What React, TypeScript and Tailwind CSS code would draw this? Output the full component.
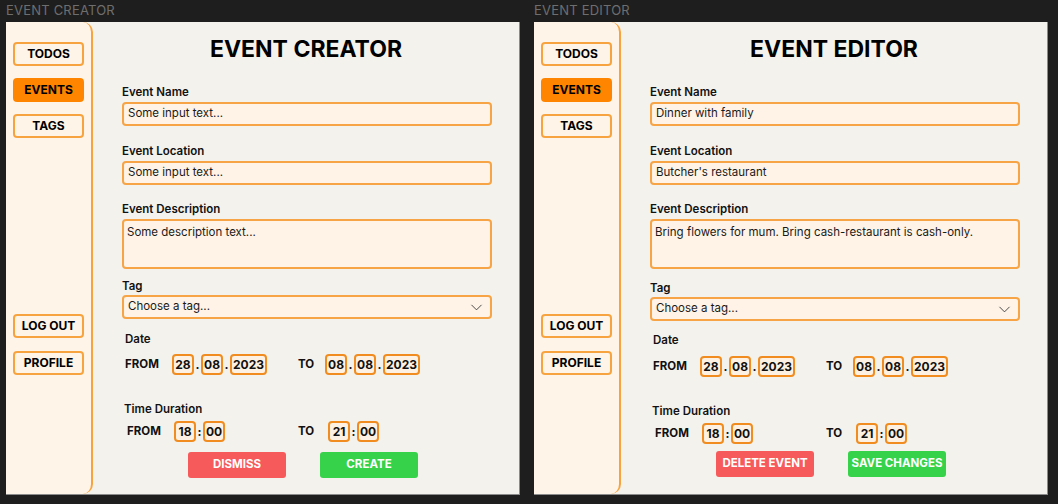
import { ChevronDown } from "lucide-react";

interface FormData {
  title: string;
  name: string;
  location: string;
  description: string;
  left: string;
  right: string;
  editor: boolean;
}

const forms: FormData[] = [
  {
    title: "EVENT CREATOR",
    name: "Some input text...",
    location: "Some input text...",
    description: "Some description text...",
    left: "DISMISS",
    right: "CREATE",
    editor: false,
  },
  {
    title: "EVENT EDITOR",
    name: "Dinner with family",
    location: "Butcher's restaurant",
    description: "Bring flowers for mum. Bring cash-restaurant is cash-only.",
    left: "DELETE EVENT",
    right: "SAVE CHANGES",
    editor: true,
  },
];

function NavButton({ label, active }: { label: string; active?: boolean }) {
  return (
    <div
      className={
        "w-[71px] h-[24px] rounded-[4px] border-2 flex items-center justify-center text-[12px] font-bold text-black " +
        (active ? "bg-[#ff8500] border-[#ff8500]" : "bg-[#fef4e8] border-[#f7a440]")
      }
    >
      {label}
    </div>
  );
}

function Box({ value, wide }: { value: string; wide?: boolean }) {
  return (
    <div
      className={
        "h-[21px] rounded-[4px] border-2 border-[#f08c20] bg-[#fdf1e3] flex items-center justify-center text-[12px] font-bold text-[#111] " +
        (wide ? "w-[37px]" : "w-[22px]")
      }
    >
      {value}
    </div>
  );
}

function Sep({ ch }: { ch: string }) {
  return <div className="w-[7px] text-center text-[12px] font-bold text-[#111]">{ch}</div>;
}

function Label({ text }: { text: string }) {
  return <div className="text-[11.5px] leading-[14px] font-semibold text-[#111]">{text}</div>;
}

function Field({ text }: { text: string }) {
  return (
    <div className="w-[370px] h-[24px] mt-[3px] rounded-[4px] border-2 border-[#f6a445] bg-[#fef3e6] flex items-center px-[4px] text-[11.5px] text-[#1a1a1a]">
      {text}
    </div>
  );
}

function Frame({ f }: { f: FormData }) {
  return (
    <div className="flex flex-col">
      <div className="h-[22px] flex items-center text-[13px] text-[#6e6e6e] tracking-[0.2px]">{f.title}</div>
      <div className="w-[514px] h-[473px] flex bg-[#f4f2ed] border-r border-b border-[#8b8b8b] overflow-hidden">
        <div className="w-[87px] shrink-0 bg-[#fef4e8] border-r-2 border-[#f7a440] rounded-r-[10px] flex flex-col items-center pt-[20px]">
          <div className="flex flex-col gap-[12px]">
            <NavButton label="TODOS" />
            <NavButton label="EVENTS" active />
            <NavButton label="TAGS" />
          </div>
          <div className="flex flex-col gap-[13px] mt-[176px]">
            <NavButton label="LOG OUT" />
            <NavButton label="PROFILE" />
          </div>
        </div>
        <div className="flex-1 flex flex-col pl-[29px]">
          <div className="pt-[13px] text-[23px] leading-[28px] font-bold text-black text-center pr-[29px]">
            {f.title}
          </div>
          <div className="mt-[22px]">
            <Label text="Event Name" />
            <Field text={f.name} />
          </div>
          <div className="mt-[18px]">
            <Label text="Event Location" />
            <Field text={f.location} />
          </div>
          <div className="mt-[17px]">
            <Label text="Event Description" />
            <div className="w-[370px] h-[50px] mt-[3px] rounded-[4px] border-2 border-[#f6a445] bg-[#fef3e6] px-[3px] pt-[4px] text-[11.5px] leading-[14px] text-[#1a1a1a]">
              {f.description}
            </div>
          </div>
          <div className={f.editor ? "mt-[12px]" : "mt-[10px]"}>
            <Label text="Tag" />
            <div className="w-[370px] h-[24px] mt-[2px] rounded-[4px] border-2 border-[#f6a445] bg-[#fef3e6] flex items-center justify-between pl-[4px] pr-[4px] text-[11.5px] text-[#1a1a1a]">
              <span>Choose a tag...</span>
              <ChevronDown size={19} strokeWidth={1.1} className="text-[#333]" />
            </div>
          </div>
          <div className={"pl-[3px] " + (f.editor ? "mt-[12px]" : "mt-[13px]")}>
            <Label text="Date" />
          </div>
          <div
            className={
              "flex items-center pl-[3px] text-[11.5px] font-bold text-[#111] " +
              (f.editor ? "mt-[9px]" : "mt-[8px]")
            }
          >
            <div className="w-[173px] flex items-center">
              <div className="w-[47px]">FROM</div>
              <Box value="28" />
              <Sep ch="." />
              <Box value="08" />
              <Sep ch="." />
              <Box value="2023" wide />
            </div>
            <div className="w-[27px]">TO</div>
            <Box value="08" />
            <Sep ch="." />
            <Box value="08" />
            <Sep ch="." />
            <Box value="2023" wide />
          </div>
          <div className="pl-[2px] mt-[27px]">
            <Label text="Time Duration" />
          </div>
          <div className="flex items-center mt-[5px] pl-[5px] text-[11.5px] font-bold text-[#111]">
            <div className="w-[171px] flex items-center">
              <div className="w-[47px]">FROM</div>
              <Box value="18" />
              <Sep ch=":" />
              <Box value="00" />
            </div>
            <div className="w-[30px]">TO</div>
            <Box value="21" />
            <Sep ch=":" />
            <Box value="00" />
          </div>
          <div className={"flex pl-[66px] gap-[34px] " + (f.editor ? "mt-[7px]" : "mt-[10px]")}>
            <div className="w-[98px] h-[26px] rounded-[3px] bg-[#f65a5a] flex items-center justify-center text-[11.5px] font-bold text-white">
              {f.left}
            </div>
            <div className="w-[98px] h-[26px] rounded-[3px] bg-[#35d24a] flex items-center justify-center text-[11.5px] font-bold text-white">
              {f.right}
            </div>
          </div>
        </div>
      </div>
    </div>
  );
}

export default function App() {
  return (
    <div className="w-[1058px] h-[504px] bg-[#1e1e1e] flex gap-[14px] pl-[6px] font-['Inter',sans-serif]">
      {forms.map(f => (
        <Frame key={f.title} f={f} />
      ))}
    </div>
  );
}
